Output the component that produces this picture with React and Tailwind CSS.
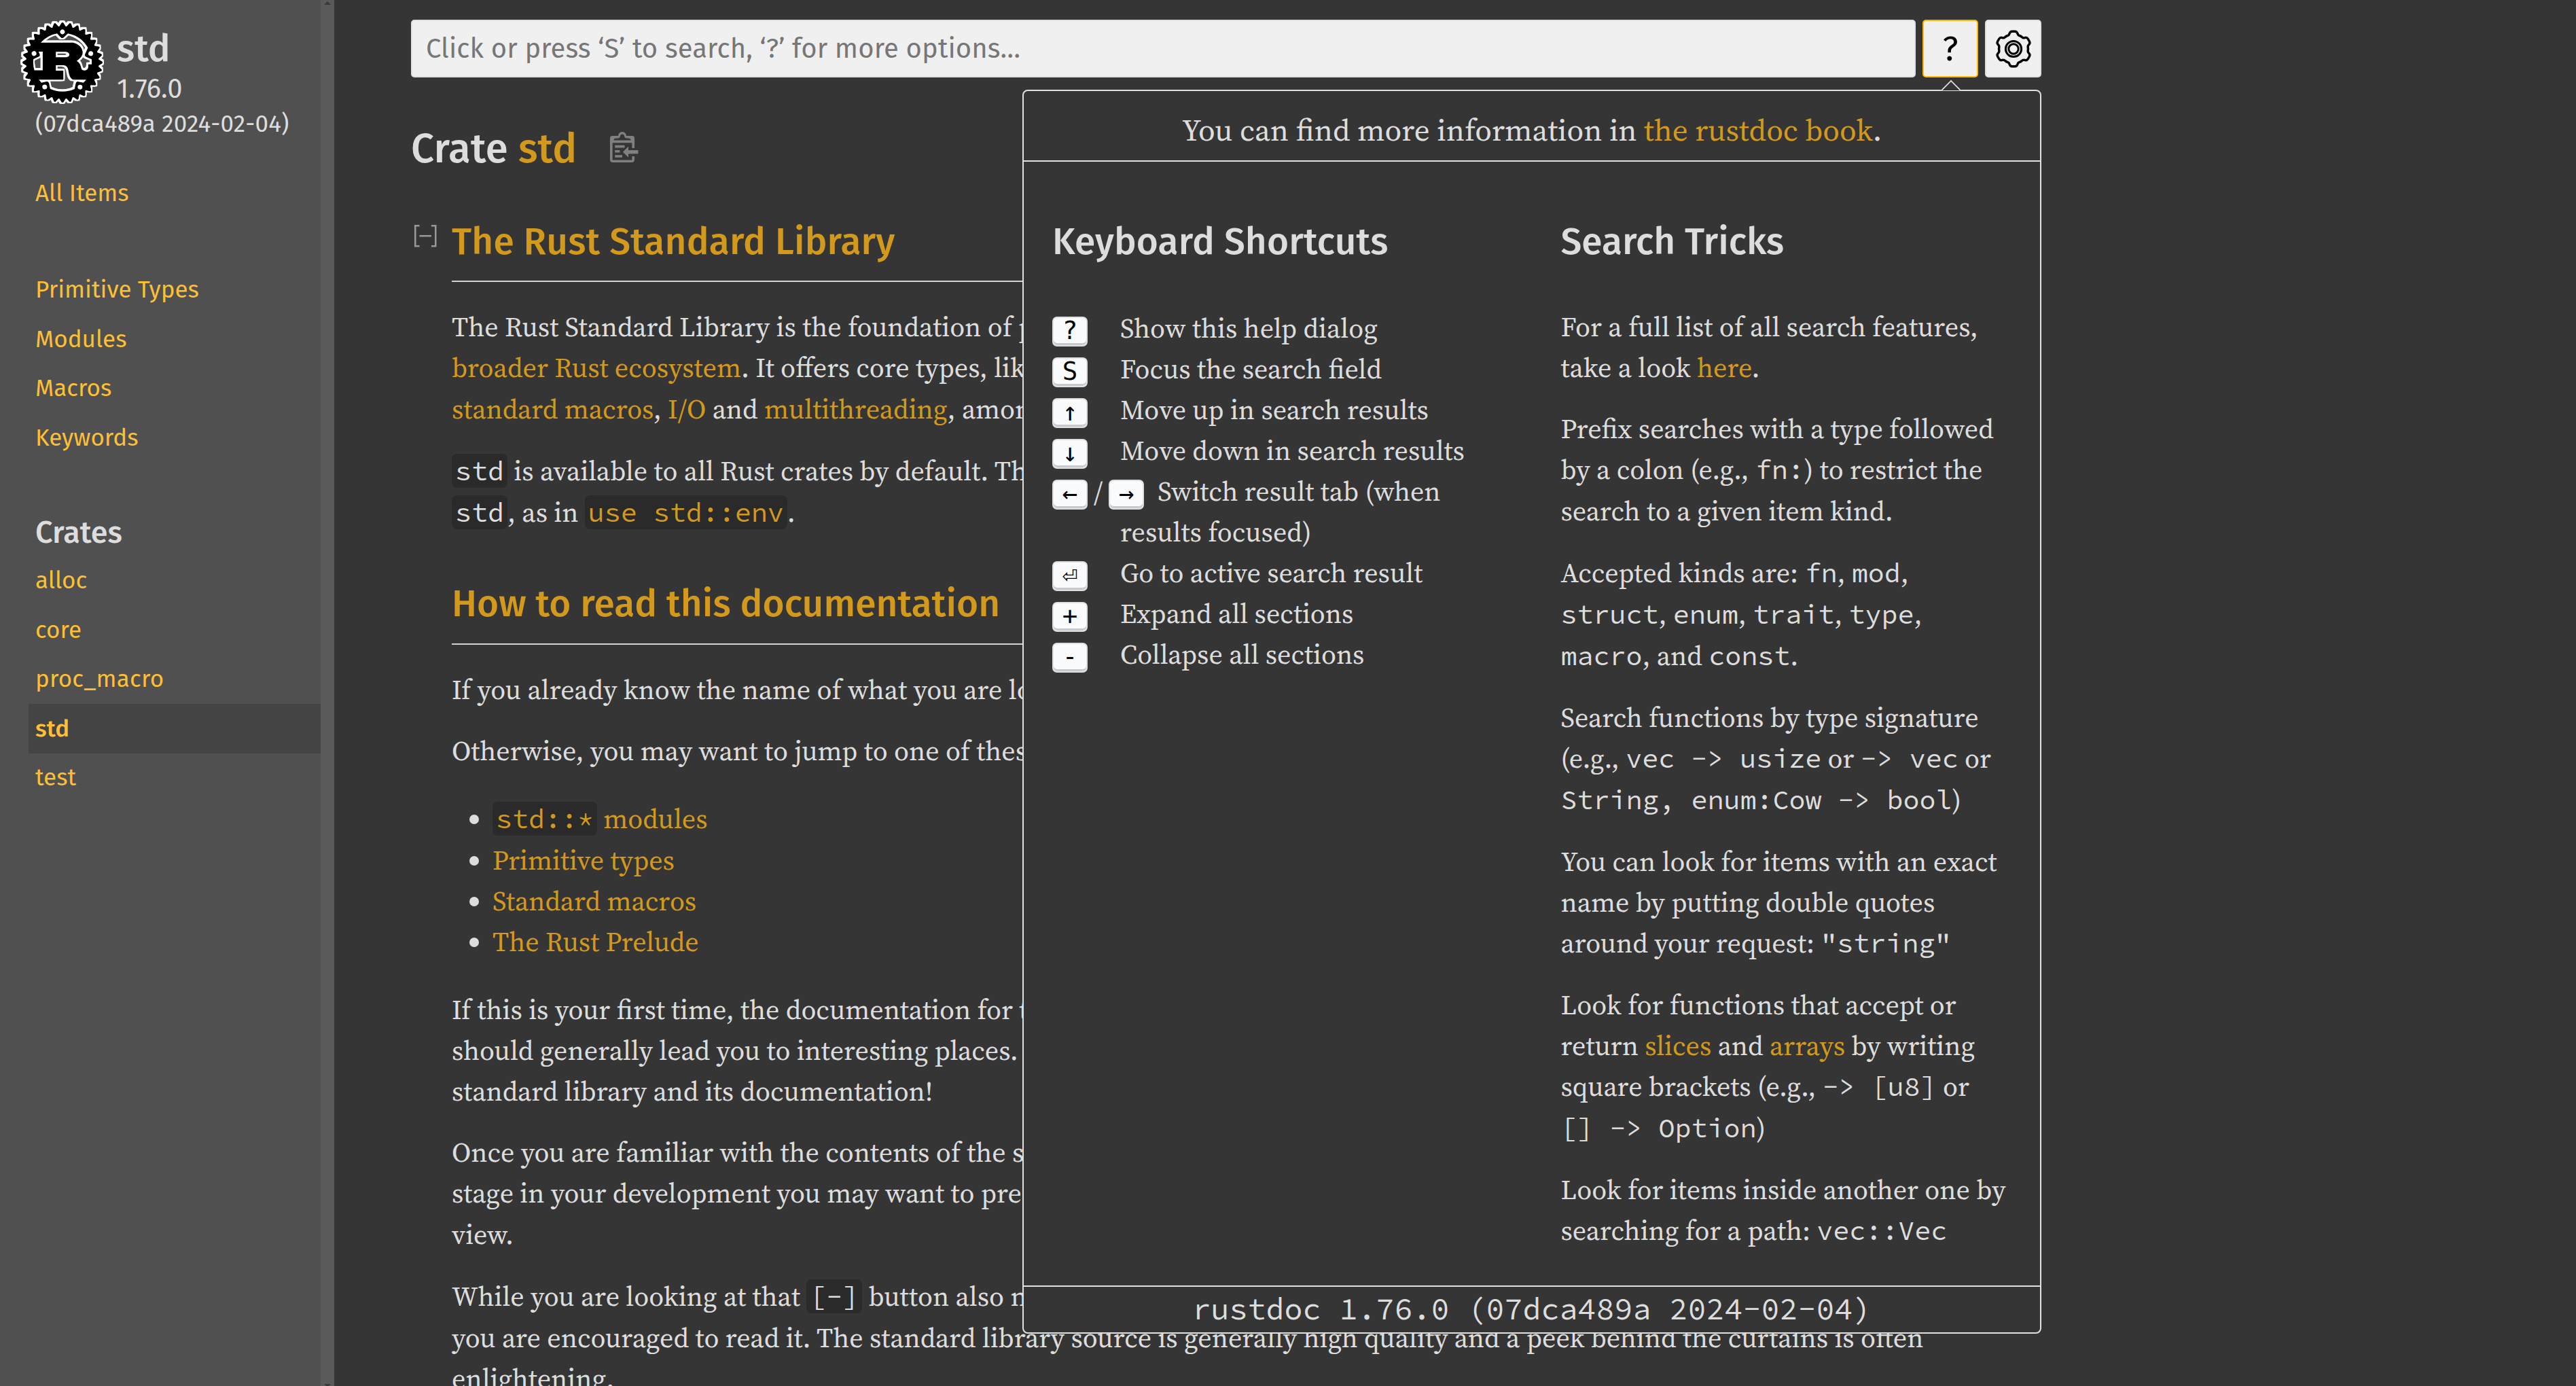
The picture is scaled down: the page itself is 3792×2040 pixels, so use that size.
import React from "react";
import { SiRust } from "react-icons/si";

const sans = "font-['Fira_Sans','Noto_Sans',sans-serif]";
const serif = "font-['Source_Serif_4','Liberation_Serif',serif]";
const mono = "font-['Source_Code_Pro','Liberation_Mono',monospace]";

const itemLinks = ["Primitive Types", "Modules", "Macros", "Keywords"];
const crates = ["alloc", "core", "proc_macro", "std", "test"];

function SideLink({ children, active }) {
  return (
    <li className={`ml-[42px] flex h-[72.5px] items-center pb-px pl-[10px] text-[35px] leading-[52px] text-[#fdbf35] ${active ? "bg-[#444444] font-medium" : ""}`}>
      <a>{children}</a>
    </li>
  );
}

function Sidebar() {
  return (
    <nav className={`flex h-full w-[492px] shrink-0 bg-[#505050] text-[#dddddd] ${sans}`}>
      <div className="w-[472px]">
        <div className="flex h-[158px] pl-[33px] pt-[33px]">
          <SiRust className="size-[118px] shrink-0 text-black [filter:drop-shadow(2.5px_0_0_#fff)_drop-shadow(0_2.5px_0_#fff)_drop-shadow(-2.5px_0_0_#fff)_drop-shadow(0_-2.5px_0_#fff)]" />
          <div className="ml-[21px]">
            <h2 className="mt-[6px] text-[55px] font-medium leading-[66px]">std</h2>
            <div className="mt-[2px] text-[40px] leading-[48px]">1.76.0</div>
          </div>
        </div>
        <div className="ml-[52px] whitespace-nowrap text-[35px] leading-[48px] tracking-[0.15px]">(07dca489a 2024-02-04)</div>
        <ul className="mt-[42px]">
          <SideLink>All Items</SideLink>
        </ul>
        <ul className="mt-[70px]">
          {itemLinks.map((t) => (
            <SideLink key={t}>{t}</SideLink>
          ))}
        </ul>
        <h3 className="ml-[52px] mt-[69px] text-[45px] font-medium leading-[68px]">Crates</h3>
        <ul className="mt-[1px]">
          {crates.map((t) => (
            <SideLink key={t} active={t === "std"}><span className={t === "proc_macro" ? "tracking-[0.2px]" : ""}>{t}</span></SideLink>
          ))}
        </ul>
      </div>
      <div className="flex w-[20px] flex-col items-center justify-between bg-[#5a5a5a] pt-[2px]">
        <svg width="10" height="5" viewBox="0 0 10 5"><path d="M0 5L5 0L10 5Z" fill="#383838" /></svg>
        <svg width="10" height="3" viewBox="0 0 10 3"><path d="M0 0H10L7 3H3Z" fill="#383838" /></svg>
      </div>
    </nav>
  );
}

const lobe = "M-10.75 -18.6L-7.6 -20Q-6.5 -20.7 -6 -22.4Q-5.2 -25.8 -2 -25.8H2Q5.2 -25.8 6 -22.4Q6.5 -20.7 7.6 -20L10.75 -18.6";

function Gear() {
  return (
    <svg width="56" height="56" viewBox="-28 -28 56 56" fill="none" stroke="#000" strokeLinecap="round" strokeLinejoin="round">
      {[0, 60, 120, 180, 240, 300].map((a) => (
        <path key={a} d={lobe} strokeWidth="3.4" transform={`rotate(${a})`} />
      ))}
      <circle r="11.6" strokeWidth="3" />
      <circle r="7.2" strokeWidth="3" />
    </svg>
  );
}

function Clipboard() {
  return (
    <svg width="43.2" height="45" viewBox="0 0 24 25" fill="#808080">
      <path d="M18 20h2v3c0 1-1 2-2 2H2c-.998 0-2-1-2-2V5c0-.911.755-1.667 1.667-1.667h5A3.323 3.323 0 0110 0a3.323 3.323 0 013.333 3.333h5C19.245 3.333 20 4.09 20 5v8.333h-2V9H2v14h16v-3zM3 7h14c0-.911-.793-1.667-1.75-1.667H13.5c-.957 0-1.75-.755-1.75-1.666C11.75 2.755 10.957 2 10 2s-1.75.755-1.75 1.667c0 .911-.793 1.666-1.75 1.666H4.75C3.793 5.333 3 6.09 3 7z" />
      <path d="M4 19h6v2H4zM12 11H4v2h8zM4 17h4v-2H4zM15 15v-3l-4.5 4.5L15 21v-3l8.027-.032L23 15z" />
    </svg>
  );
}

const A = ({ children }) => <a className="text-[#d2991d]">{children}</a>;
const Code = ({ children }) => <code className={`rounded-[7.5px] bg-[#2a2a2a] px-[5px] text-[40px] leading-[61px] ${mono}`}>{children}</code>;
const C = ({ children }) => <code className={`text-[40px] leading-[61px] ${mono}`}>{children}</code>;

function DocHeading({ children, className }) {
  return (
    <h2 className={`border-b-2 border-[#d2d2d2] text-[55px] font-medium leading-[82px] text-[#d2991d] ${sans} ${className}`}>{children}</h2>
  );
}

function Doc() {
  return (
    <div className="ml-[60px] whitespace-nowrap">
      <DocHeading className="mb-[36px] pb-[16px] tracking-[0.14px]">The Rust Standard Library</DocHeading>
      <p className="mb-[31px]">
        The Rust Standard Library is the foundation of portable Rust software, a set of minimal and battle-tested shared abstractions for the<br />
        <A>broader Rust ecosystem</A>. It offers core types, like <A><Code>Vec&lt;T&gt;</Code></A> and <A><Code>Option&lt;T&gt;</Code></A>, library-defined operations on language primitives,<br />
        <A>standard macros</A>, <A>I/O</A> and <A>multithreading</A>, among many other things.
      </p>
      <p>
        <Code>std</Code> is available to all Rust crates by default. Therefore, the standard library can be accessed in <A><Code>use</Code></A> statements through the path<br />
        <Code>std</Code>, as in <A><Code>use std::env</Code></A>.
      </p>
      <DocHeading className="mb-[36px] mt-[63px] pb-[17px] tracking-[0.08px]">How to read this documentation</DocHeading>
      <p className="mb-[30px]">If you already know the name of what you are looking for, the fastest way to find it is to use the search bar at the top of the page.</p>
      <p>Otherwise, you may want to jump to one of these useful sections:</p>
      <ul className="my-[40px] list-disc pl-[60px]">
        <li><A><Code>std::*</Code> modules</A></li>
        <li><A>Primitive types</A></li>
        <li><A>Standard macros</A></li>
        <li><A>The Rust Prelude</A></li>
      </ul>
      <p className="mb-[30px]">
        If this is your first time, the documentation for the standard library is written to be casually perused. Clicking on interesting things<br />
        should generally lead you to interesting places. Still, there are important bits you don’t want to miss, so read on for a tour of the<br />
        standard library and its documentation!
      </p>
      <p className="mb-[31px]">
        Once you are familiar with the contents of the standard library you may begin to find the verbosity of the prose distracting. At this<br />
        stage in your development you may want to press the <Code>[-]</Code> button near the top of the page to collapse it into a more skimmable<br />
        view.
      </p>
      <p>
        While you are looking at that <Code>[-]</Code> button also notice the source link. Rust’s API documentation comes with the source code and<br />
        you are encouraged to read it. The standard library source is generally high quality and a peek behind the curtains is often<br />
        enlightening.
      </p>
    </div>
  );
}

function Kbd({ children }) {
  return (
    <kbd className="flex h-[44px] w-[52px] items-center justify-center rounded-[7px] border-2 border-[#e0e0e0] bg-[#fafbfc] pb-[2px] font-['DejaVu_Sans_Mono',monospace] text-[37.5px] leading-none text-black shadow-[inset_0_-3px_0_#c6cbd1]">
      {children}
    </kbd>
  );
}

const shortcuts = [
  ["?", "Show this help dialog"],
  ["S", "Focus the search field"],
  ["↑", "Move up in search results"],
  ["↓", "Move down in search results"],
  null,
  ["⏎", "Go to active search result"],
  ["+", "Expand all sections"],
  ["-", "Collapse all sections"],
];

function HelpPopover() {
  return (
    <div className="absolute left-[900px] top-[103px] flex h-[1831px] w-[1500px] flex-col rounded-[8px] border-2 border-[#e0e0e0] bg-[#353535] text-[40px] leading-[60px]">
      <div className="absolute left-[1354px] top-[-12.5px] size-[22px] rotate-45 border-l-2 border-t-2 border-[#e0e0e0] bg-[#353535] [clip-path:polygon(0_0,100%_0,0_100%)]" />
      <div className="h-[104px] border-b-2 border-[#e0e0e0] pt-[24px] text-center text-[45px] leading-[67px]">
        You can find more information in <A>the rustdoc book</A>.
      </div>
      <div className="flex flex-1 pt-[76px]">
        <div className="w-1/2 pl-[42px]">
          <h2 className={`mb-[55px] text-[55px] font-medium leading-[84px] tracking-[0.14px] ${sans}`}>Keyboard Shortcuts</h2>
          <dl>
            {shortcuts.map((s) =>
              s ? (
                <div key={s[0]} className="flex h-[60px] items-start">
                  <dt className="w-[100px] pt-[13px]"><Kbd>{s[0]}</Kbd></dt>
                  <dd>{s[1]}</dd>
                </div>
              ) : (
                <div key="tabs" className="h-[120px]">
                  <div className="flex h-[60px] items-start">
                    <dt className="mr-[20px] flex gap-[9px]">
                      <span className="pt-[13px]"><Kbd>←</Kbd></span>/<span className="pt-[13px]"><Kbd>→</Kbd></span>
                    </dt>
                    <dd>Switch result tab (when</dd>
                  </div>
                  <div className="pl-[100px]">results focused)</div>
                </div>
              ),
            )}
          </dl>
        </div>
        <div className="flex w-1/2 flex-col gap-[30px] whitespace-nowrap pl-[42.5px]">
          <h2 className={`mb-[23px] text-[55px] font-medium leading-[84px] ${sans}`}>Search Tricks</h2>
          <p>For a full list of all search features,<br />take a look <A>here</A>.</p>
          <p>Prefix searches with a type followed<br />by a colon (e.g., <C>fn:</C>) to restrict the<br />search to a given item kind.</p>
          <p className="mt-px">Accepted kinds are: <C>fn</C>, <C>mod</C>,<br /><C>struct</C>, <C>enum</C>, <C>trait</C>, <C>type</C>,<br /><C>macro</C>, and <C>const</C>.</p>
          <p>Search functions by type signature<br />(e.g., <C>vec -&gt; usize</C> or <C>-&gt; vec</C> or<br /><C>String, enum:Cow -&gt; bool</C>)</p>
          <p>You can look for items with an exact<br />name by putting double quotes<br />around your request: <C>"string"</C></p>
          <p>Look for functions that accept or<br />return <A>slices</A> and <A>arrays</A> by writing<br />square brackets (e.g., <C>-&gt; [u8]</C> or<br /><C>[] -&gt; Option</C>)</p>
          <p>Look for items inside another one by<br />searching for a path: <C>vec::Vec</C></p>
        </div>
      </div>
      <div className={`h-[69px] border-t-2 border-[#e0e0e0] text-center text-[45px] leading-[64px] ${mono}`}>
        rustdoc 1.76.0 (07dca489a 2024-02-04)
      </div>
    </div>
  );
}

export default function App() {
  return (
    <div className={`flex h-[2040px] w-[3792px] overflow-hidden bg-[#353535] text-[40px] leading-[60px] text-[#dddddd] ${serif}`}>
      <Sidebar />
      <main className="ml-[113px] w-[2400px] pt-[29px]">
        <div className="relative z-10">
          <div className={`flex h-[85px] gap-[10px] ${sans}`}>
            <div className="flex flex-1 items-center rounded-[5px] border-2 border-[#e0e0e0] bg-[#f0f0f0] pl-[20px] text-[40px] leading-[60px] tracking-[0.09px] text-[#777777]">
              Click or press ‘S’ to search, ‘?’ for more options…
            </div>
            <button className="flex w-[82px] items-center justify-center rounded-[5px] border-2 border-[#ffb900] bg-[#f0f0f0] text-[50px] leading-none text-black">?</button>
            <button className="flex w-[83px] items-center justify-center rounded-[5px] border-2 border-[#e0e0e0] bg-[#f0f0f0]"><Gear /></button>
          </div>
          <HelpPopover />
        </div>
        <div className={`mt-[60px] flex h-[90px] items-start text-[60px] font-medium leading-[90px] tracking-[0.14px] ${sans}`}>
          <h1>Crate <A>std</A></h1>
          <span className="ml-[49px] mt-[20px]"><Clipboard /></span>
        </div>
        <div className="relative mt-[51px]">
          <svg className="absolute left-0 top-[11px]" width="42.5" height="42.5" viewBox="0 0 17 17" fill="none" stroke="#999" strokeWidth="1">
            <path d="M5 2.5H2.5v12H5m7-12h2.5v12H12M5 8.5h7" />
          </svg>
          <Doc />
        </div>
      </main>
    </div>
  );
}
